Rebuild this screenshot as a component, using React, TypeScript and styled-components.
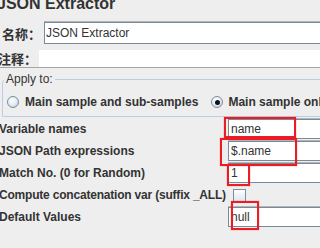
import React from "react";
import styled, { createGlobalStyle } from "styled-components";

const Global = createGlobalStyle`
  html, body { margin: 0; padding: 0; background: #eeeeee; }
  body { overflow: hidden; }
`;

const Root = styled.div`
  position: relative;
  width: 320px;
  height: 248px;
  overflow: hidden;
  background: #eeeeee;
  font-family: "Liberation Sans", Arial, "Noto Sans CJK SC", sans-serif;
  color: #333340;
  font-size: 12px;
`;

const Title = styled.div`
  margin: -5px 0 0 -3px;
  height: 18px;
  line-height: 18px;
  font-size: 16px;
  font-weight: bold;
  color: #333;
`;

const TopRow = styled.div`
  display: flex;
  align-items: center;
  margin-top: 9px;
  height: 22px;
`;

const CnLabel = styled.div<{ $w: number; $shift: number }>`
  width: ${(p) => p.$w}px;
  margin-left: ${(p) => p.$shift}px;
  flex: none;
  font-family: "Noto Sans CJK SC", "Liberation Sans", sans-serif;
  font-weight: bold;
  font-size: 13px;
  line-height: 15px;
  color: #333;
  white-space: nowrap;
`;

const TextField = styled.div<{ $pad: number }>`
  flex: 1;
  box-sizing: border-box;
  height: 100%;
  margin-right: -20px;
  background: #ffffff;
  border: 1px solid #7a8a99;
  box-shadow: 0 -1px 0 #b4b4b4;
  padding-left: ${(p) => p.$pad}px;
  display: flex;
  align-items: center;
  font-size: 12px;
  color: #333;
  white-space: nowrap;
`;

const CommentRow = styled.div`
  display: flex;
  align-items: center;
  margin-top: 6px;
  height: 17px;
  border-bottom: 1px solid #a5a5a5;
`;

const CommentArea = styled.div`
  flex: 1;
  align-self: stretch;
  background: #ffffff;
`;

const Group = styled.fieldset`
  margin: 4px -10px 0 2px;
  padding: 0 0 5px 1px;
  border: 1px solid #b8cfe5;
  border-radius: 4px 0 0 0;
  min-width: 0;
`;

const Legend = styled.legend`
  padding: 0 2px;
  margin: 0;
  height: 14px;
  line-height: 14px;
  font-size: 12px;
  color: #333;
`;

const RadioRow = styled.div`
  display: flex;
  align-items: center;
  height: 18px;
  margin-top: 7px;
  padding-left: 3px;
  white-space: nowrap;
`;

const RadioItem = styled.label<{ $gap: number; $after: number }>`
  display: flex;
  align-items: center;
  gap: ${(p) => p.$gap}px;
  margin-right: ${(p) => p.$after}px;
  font-weight: bold;
  font-size: 12px;
  color: #333;
`;

const RadioDot = styled.span<{ $on: boolean }>`
  position: relative;
  width: 12px;
  height: 12px;
  box-sizing: border-box;
  border-radius: 50%;
  border: 1px solid #7f8c99;
  background: radial-gradient(circle at 40% 35%, #ffffff 0%, #e6eef6 45%, #b8c9da 100%);
  flex: none;
  &::after {
    content: "";
    display: ${(p) => (p.$on ? "block" : "none")};
    position: absolute;
    left: 2.5px;
    top: 2.5px;
    width: 5px;
    height: 5px;
    border-radius: 50%;
    background: #111;
  }
`;

const Form = styled.div`
  display: grid;
  grid-template-columns: 228px 1fr;
  grid-auto-rows: 22px;
  margin-top: 1px;
`;

const RowLabel = styled.div<{ $tight?: boolean }>`
  display: flex;
  align-items: center;
  margin-left: -1px;
  font-weight: bold;
  font-size: 12px;
  letter-spacing: ${(p) => (p.$tight ? "-0.2px" : "0")};
  color: #333;
  white-space: nowrap;
`;

const FieldCell = styled.div`
  display: flex;
  align-items: center;
  padding: 1px 0;
  box-sizing: border-box;
`;

const Check = styled.span`
  width: 13px;
  height: 13px;
  box-sizing: border-box;
  margin-left: 5px;
  border: 1px solid #7f8c99;
  background: linear-gradient(180deg, #ffffff 0%, #dce6f0 100%);
`;

const Mark = styled.div`
  position: absolute;
  box-sizing: border-box;
  border: 2px solid #ec1c24;
  box-shadow: 0 0 1px rgba(236, 28, 36, 0.7);
  pointer-events: none;
`;

const marks = [
  { l: 224, t: 117, w: 72, h: 21 },
  { l: 220, t: 138, w: 77, h: 28 },
  { l: 227, t: 164, w: 23, h: 22 },
  { l: 231, t: 201, w: 28, h: 29 },
];

const rows: { label: string; value?: string; check?: boolean }[] = [
  { label: "Variable names", value: "name" },
  { label: "JSON Path expressions", value: "$.name" },
  { label: "Match No. (0 for Random)", value: "1" },
  { label: "Compute concatenation var (suffix _ALL)", check: true },
  { label: "Default Values", value: "null" },
];

export default function App() {
  return (
    <Root>
      <Global />
      <Title>JSON Extractor</Title>
      <TopRow>
        <CnLabel $w={42} $shift={2}>名称：</CnLabel>
        <TextField $pad={1}>JSON Extractor</TextField>
      </TopRow>
      <CommentRow>
        <CnLabel $w={41} $shift={-2}>注释：</CnLabel>
        <CommentArea />
      </CommentRow>
      <Group>
        <Legend>Apply to:</Legend>
        <RadioRow>
          <RadioItem $gap={6} $after={13}>
            <RadioDot $on={false} />
            Main sample and sub-samples
          </RadioItem>
          <RadioItem $gap={5} $after={0}>
            <RadioDot $on={true} />
            Main sample only
          </RadioItem>
        </RadioRow>
      </Group>
      <Form>
        {rows.map((r) => (
          <React.Fragment key={r.label}>
            <RowLabel $tight={r.check}>{r.label}</RowLabel>
            <FieldCell>
              {r.check ? <Check /> : <TextField $pad={2}>{r.value}</TextField>}
            </FieldCell>
          </React.Fragment>
        ))}
      </Form>
      {marks.map((m, i) => (
        <Mark key={i} style={{ left: m.l, top: m.t, width: m.w, height: m.h }} />
      ))}
    </Root>
  );
}
